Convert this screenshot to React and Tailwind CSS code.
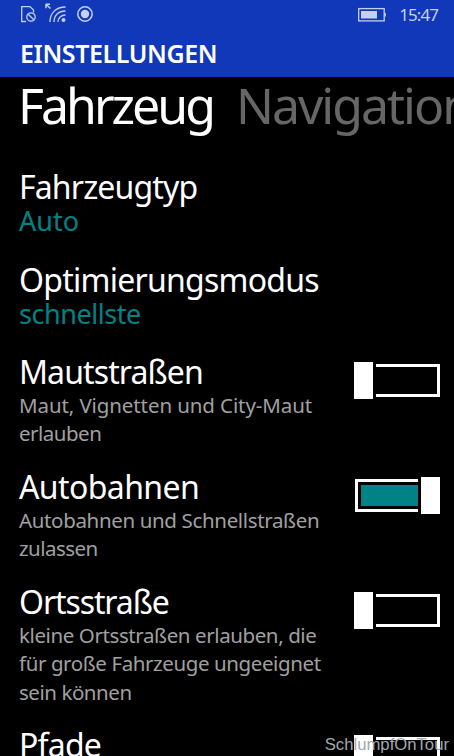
import clsx from 'clsx';

const choices = [
  { title: 'Fahrzeugtyp', value: 'Auto', titleTracking: 'tracking-[-0.85px]', valueTracking: 'tracking-[0px]' },
  { title: 'Optimierungsmodus', value: 'schnellste', titleTracking: 'tracking-[-0.75px]', valueTracking: 'tracking-[-0.45px]' },
];

const switches = [
  {
    title: 'Mautstraßen',
    on: false,
    tracking: 'tracking-[-0.9px]',
    lines: [
      { text: 'Maut, Vignetten und City-Maut', tracking: 'tracking-[-0.1px]' },
      { text: 'erlauben', tracking: 'tracking-[-0.5px]' },
    ],
  },
  {
    title: 'Autobahnen',
    on: true,
    tracking: 'tracking-[-0.6px]',
    lines: [
      { text: 'Autobahnen und Schnellstraßen', tracking: 'tracking-[-0.35px]' },
      { text: 'zulassen', tracking: 'tracking-[-0.55px]' },
    ],
  },
  {
    title: 'Ortsstraße',
    on: false,
    tracking: 'tracking-[-1.1px]',
    lines: [
      { text: 'kleine Ortsstraßen erlauben, die', tracking: 'tracking-[-0.4px]' },
      { text: 'für große Fahrzeuge ungeeignet', tracking: 'tracking-[-0.4px]' },
      { text: 'sein können', tracking: 'tracking-[-0.45px]' },
    ],
  },
  { title: 'Pfade', on: false, tracking: 'tracking-[-0.8px]', lines: [] },
];

function StatusBar() {
  return (
    <div className="flex h-7 items-center justify-between pr-[16px] pl-[20px] text-[#c5d0f0]">
      <svg width="76" height="28" viewBox="0 0 76 28" fill="none" stroke="currentColor" strokeWidth="1.3">
        <path d="M6 21.5H1.7V6.6H10L13.5 10V12.5" />
        <circle cx="11" cy="17" r="4.2" />
        <path d="M8.2 14.2L13.8 19.8" />
        <path d="M25.8 4.2H30M26 4V8.2M26 4.2L30.5 8.5" strokeWidth="1.5" />
        <path d="M30 22C30 13 36 7 45.5 7M34 22C34 15.5 38.5 11 45.5 11M38 22C38 18 41 15 45.5 15" />
        <circle cx="43.5" cy="20" r="2" fill="currentColor" stroke="none" />
        <circle cx="65" cy="14" r="7.2" strokeWidth="1.5" />
        <circle cx="65" cy="14" r="4.2" fill="currentColor" stroke="none" />
      </svg>
      <div className="flex items-center gap-[11px]">
        <svg width="30" height="28" viewBox="0 0 30 28" fill="none" stroke="currentColor">
          <rect x="0.7" y="8.6" width="25.5" height="12.3" strokeWidth="1.3" />
          <rect x="3" y="11" width="16" height="7.5" fill="currentColor" stroke="none" />
          <path d="M27.2 13V16.5" strokeWidth="1.3" />
        </svg>
        <span className="pt-[2px] text-[17px] leading-7 tracking-[-0.95px]">15:47</span>
      </div>
    </div>
  );
}

function Toggle({ on }) {
  return (
    <div className={clsx('flex h-[37px] w-[86px] shrink-0 items-center gap-[3px]', on && 'flex-row-reverse')}>
      <div className="h-[37px] w-[19px] shrink-0 bg-white" />
      {on ? (
        <div className="h-[33px] w-[63px] border-3 border-r-0 border-white py-[3px] pl-[3px]">
          <div className="h-full bg-[#008287]" />
        </div>
      ) : (
        <div className="h-[33px] w-[64px] border-3 border-l-0 border-white" />
      )}
    </div>
  );
}

export default function App() {
  return (
    <div className="relative flex h-[756px] w-[454px] flex-col overflow-hidden bg-black font-['Noto_Sans',sans-serif] text-white">
      <header className="h-[77px] shrink-0 bg-[#1038b8]">
        <StatusBar />
        <h1 className="pl-[20px] text-[25px] leading-[50px] font-semibold tracking-[-0.4px]">EINSTELLUNGEN</h1>
      </header>

      <nav className="flex h-[91px] shrink-0 gap-[23px] pl-[18px] text-[50px] leading-[56px] whitespace-nowrap">
        <span className="tracking-[-3px]">Fahrzeug</span>
        <span className="tracking-[-2px] text-[#666]">Navigation</span>
      </nav>

      <main className="flex flex-col pl-[19px]">
        {choices.map((item) => (
          <section key={item.title} className="h-[92.5px] pt-px">
            <h2 className={clsx('text-[32px] leading-[35px]', item.titleTracking)}>{item.title}</h2>
            <p className={clsx('text-[27px] leading-[34px] text-[#008287]', item.valueTracking)}>{item.value}</p>
          </section>
        ))}

        {switches.map((item) => (
          <section key={item.title} className="flex justify-between pr-[14px] pb-[20.2px]">
            <div className="pt-px">
              <h2 className={clsx('text-[32px] leading-[35px]', item.tracking)}>{item.title}</h2>
              <p className="pt-[2px] text-[20.5px] leading-[28.4px] whitespace-nowrap text-[#a0a0a0]">
                {item.lines.map((line) => (
                  <span key={line.text} className={clsx('block', line.tracking)}>{line.text}</span>
                ))}
              </p>
            </div>
            <div className="pt-[9px]">
              <Toggle on={item.on} />
            </div>
          </section>
        ))}
      </main>

      <div className="absolute right-[5px] -bottom-px font-['Liberation_Sans',sans-serif] text-[16.7px] leading-6 text-[#a0a8b0]">
        SchlumpfOnTour
      </div>
    </div>
  );
}
